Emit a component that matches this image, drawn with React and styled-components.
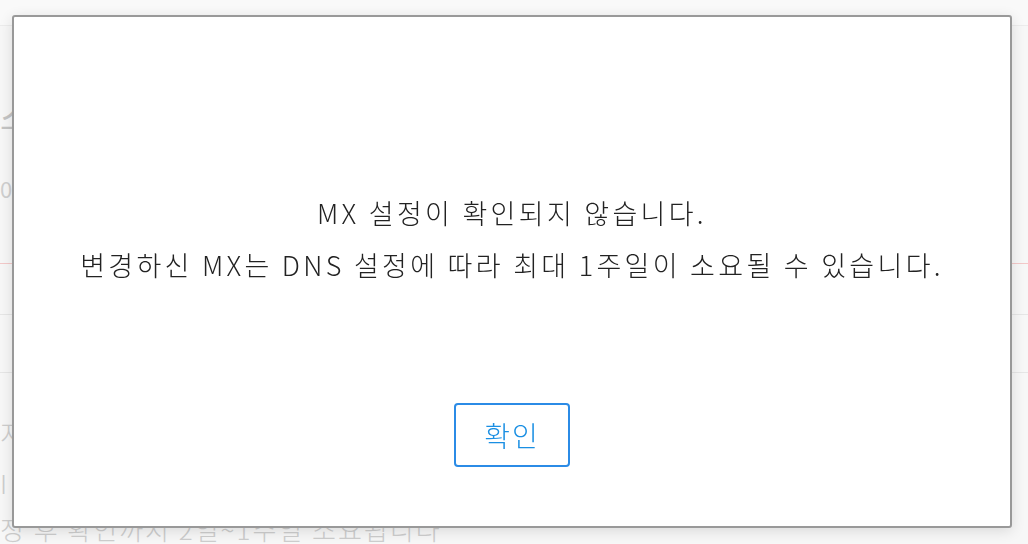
import React from 'react';
import styled, { createGlobalStyle } from 'styled-components';

const GlobalStyle = createGlobalStyle`
  html, body {
    margin: 0;
    padding: 0;
    background: #f7f7f7;
    font-family: "Noto Sans CJK KR", "Noto Sans", sans-serif;
    overflow: hidden;
  }
`;

const Page = styled.div`
  width: 1028px;
  height: 544px;
  overflow: hidden;
  display: flex;
  flex-direction: column;
  background: #f7f7f7;
  color: #c9c9c9;
`;

const Header = styled.div`
  height: 42px;
  border-bottom: 1px solid #ececec;
  background: #f9f9f9;
`;

const Content = styled.div`
  display: flex;
  flex-direction: column;
`;

const Title = styled.div`
  font-size: 34px;
  line-height: 40px;
  margin-top: 70px;
  color: #c4c4c4;
`;

const Sub = styled.div`
  font-size: 22px;
  margin-top: 36px;
  color: #cfcfcf;
`;

const Divider = styled.div`
  height: 1px;
  margin-top: ${(p) => p.$gap}px;
  background: ${(p) => p.$color || '#e6e6e6'};
`;

const Row = styled.div`
  font-size: 26px;
  font-weight: 300;
  line-height: 30px;
  margin-top: ${(p) => p.$gap}px;
  color: #cdcdcd;
  white-space: nowrap;
  letter-spacing: 2px;
`;

const Overlay = styled.div`
  position: fixed;
  inset: 0;
  display: flex;
  align-items: flex-start;
  justify-content: flex-start;
  padding: 15px 0 0 12px;
`;

const Modal = styled.div`
  box-sizing: border-box;
  width: 1000px;
  height: 513px;
  background: #fff;
  border: 2px solid #999;
  border-radius: 3px;
  box-shadow: 0 3px 14px rgba(0, 0, 0, 0.12);
  display: flex;
  flex-direction: column;
  align-items: center;
  padding-top: 170px;
`;

const Message = styled.p`
  margin: 0;
  text-align: center;
  font-size: 27px;
  font-weight: 300;
  letter-spacing: 3.3px;
  line-height: 52px;
  color: #222;
`;

const ConfirmButton = styled.button`
  box-sizing: border-box;
  margin-top: 112px;
  width: 116px;
  height: 64px;
  background: #fff;
  border: 2px solid #2b8be6;
  border-radius: 4px;
  color: #1a8fe3;
  font-family: "Noto Sans CJK KR", "Noto Sans", sans-serif;
  font-size: 28px;
  font-weight: 300;
  letter-spacing: 2px;
  cursor: pointer;
`;

export default function App() {
  return (
    <>
      <GlobalStyle />
      <Page>
        <Header />
        <Content>
          <Title>스</Title>
          <Sub>0</Sub>
          <Divider $gap={59} $color="#f3c9c9" />
          <Divider $gap={50} />
          <Divider $gap={57} />
          <Row $gap={45}>지</Row>
          <Row $gap={20}>I</Row>
          <Row $gap={16}>정 후 확인까지 2일~1주일 소요됩니다</Row>
        </Content>
      </Page>
      <Overlay>
        <Modal>
          <Message>
            MX 설정이 확인되지 않습니다.
            <br />
            변경하신 MX는 DNS 설정에 따라 최대 1주일이 소요될 수 있습니다.
          </Message>
          <ConfirmButton>확인</ConfirmButton>
        </Modal>
      </Overlay>
    </>
  );
}
